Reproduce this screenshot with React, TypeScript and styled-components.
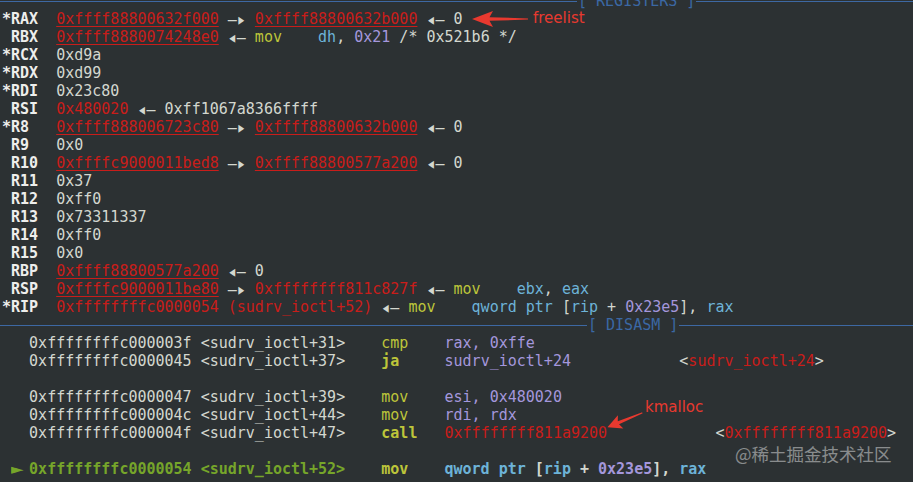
import React from "react";
import styled, { createGlobalStyle } from "styled-components";

const palette = {
  fg: "#d3d7cf",
  hi: "#eeeeec",
  red: "#c91d1a",
  yel: "#bdc53a",
  cyan: "#6db3d8",
  lav: "#a497dc",
  grn: "#76a52a",
} as const;

type Tone = keyof typeof palette;

const CELL = 9.03;

const Global = createGlobalStyle`
  html, body { margin: 0; padding: 0; background: #2c3133; }
`;

const Screen = styled.div`
  position: relative;
  width: 913px;
  height: 482px;
  overflow: hidden;
  background: #2c3133;
  font-family: "DejaVu Sans Mono", "Liberation Mono", monospace;
  font-size: 15px;
  color: ${palette.fg};
`;

const Pane = styled.div`
  display: flex;
  flex-direction: column;
  margin-top: -8px;
`;

const Line = styled.div`
  height: 18px;
  line-height: 18px;
  white-space: pre;
  padding-left: 2px;
`;

const Banner = styled.div`
  display: flex;
  align-items: center;
  height: 18px;
`;

const Rule = styled.div<{ $w?: number }>`
  height: 1px;
  background: #3d68a3;
  flex: ${(p) => (p.$w ? `0 0 ${p.$w}px` : "1 1 auto")};
`;

const BannerTitle = styled.span`
  color: #3b68a4;
  white-space: pre;
  line-height: 18px;
  padding: 0 1px;
`;

const Tok = styled.span<{ $c?: Tone; $u?: boolean; $b?: boolean }>`
  color: ${(p) => palette[p.$c ?? "fg"]};
  text-decoration: ${(p) => (p.$u ? "underline" : "none")};
  text-underline-offset: 2px;
  font-weight: ${(p) => (p.$b ? 700 : 400)};
`;

const Reg = styled.span`
  color: ${palette.hi};
  font-weight: 700;
`;

/* two-cell wide glyph (pointer arrows, current-line marker) */
const Glyph = styled.span<{ $c?: Tone; $sx: number; $sy: number; $origin?: string }>`
  display: inline-block;
  width: ${2 * CELL}px;
  height: 18px;
  vertical-align: top;
  line-height: 18px;
  color: ${(p) => palette[p.$c ?? "fg"]};
  white-space: pre;
  transform: scale(${(p) => p.$sx}, ${(p) => p.$sy});
  transform-origin: ${(p) => p.$origin ?? "center"};
`;

const CalloutText = styled.span<{ $x: number; $y: number }>`
  position: absolute;
  left: ${(p) => p.$x}px;
  top: ${(p) => p.$y}px;
  font-family: "DejaVu Sans", "Liberation Sans", sans-serif;
  font-size: 15px;
  line-height: 18px;
  color: #e8392f;
`;

const ArrowSvg = styled.svg<{ $x: number; $y: number; $rot: number }>`
  position: absolute;
  left: ${(p) => p.$x}px;
  top: ${(p) => p.$y}px;
  transform: rotate(${(p) => p.$rot}deg);
  transform-origin: center;
`;

const Watermark = styled.span`
  position: absolute;
  left: 735px;
  top: 442px;
  font-family: "Noto Sans CJK SC", "DejaVu Sans", sans-serif;
  font-size: 17.5px;
  line-height: 24px;
  color: rgba(230, 232, 232, 0.5);
  white-space: pre;
`;

const RedArrow: React.FC<{ x: number; y: number; w: number; h: number; rot?: number }> = ({
  x,
  y,
  w,
  h,
  rot = 0,
}) => (
  <ArrowSvg $x={x} $y={y} $rot={rot} width={w} height={h} viewBox="0 0 56 18" preserveAspectRatio="none">
    <path d="M0 9 L21 1 L17.5 7.2 L56 8.4 L56 9.6 L17.5 10.8 L21 17 Z" fill="#e8392f" />
  </ArrowSvg>
);

const R = ({ children }: { children: React.ReactNode }) => <Tok $c="red">{children}</Tok>;
const RU = ({ children }: { children: React.ReactNode }) => (
  <Tok $c="red" $u>
    {children}
  </Tok>
);
const To = () => (
  <Glyph $sx={1} $sy={1.35}>
    —▸
  </Glyph>
);
const Back = () => (
  <Glyph $sx={1} $sy={1.35}>
    ◂—
  </Glyph>
);

export default function App() {
  return (
    <Screen>
      <Global />
      <Pane>
        <Banner>
          <Rule $w={577} />
          <BannerTitle>[ REGISTERS ]</BannerTitle>
          <Rule />
        </Banner>
        <Line>
          <Reg>*RAX</Reg>{"  "}<RU>0xffff88800632f000</RU> <To /> <RU>0xffff88800632b000</RU> <Back /> 0
        </Line>
        <Line>
          <Reg> RBX</Reg>{"  "}<RU>0xffff8880074248e0</RU> <Back /> <Tok $c="yel">mov</Tok>{"    "}
          <Tok $c="cyan">dh</Tok>{", "}<Tok $c="lav">0x21</Tok>{" /* 0x521b6 */"}
        </Line>
        <Line>
          <Reg>*RCX</Reg>{"  0xd9a"}
        </Line>
        <Line>
          <Reg>*RDX</Reg>{"  0xd99"}
        </Line>
        <Line>
          <Reg>*RDI</Reg>{"  0x23c80"}
        </Line>
        <Line>
          <Reg> RSI</Reg>{"  "}<R>0x480020</R> <Back /> 0xff1067a8366ffff
        </Line>
        <Line>
          <Reg>*R8</Reg>{"   "}<RU>0xffff888006723c80</RU> <To /> <RU>0xffff88800632b000</RU> <Back /> 0
        </Line>
        <Line>
          <Reg> R9</Reg>{"   0x0"}
        </Line>
        <Line>
          <Reg> R10</Reg>{"  "}<RU>0xffffc9000011bed8</RU> <To /> <RU>0xffff88800577a200</RU> <Back /> 0
        </Line>
        <Line>
          <Reg> R11</Reg>{"  0x37"}
        </Line>
        <Line>
          <Reg> R12</Reg>{"  0xff0"}
        </Line>
        <Line>
          <Reg> R13</Reg>{"  0x73311337"}
        </Line>
        <Line>
          <Reg> R14</Reg>{"  0xff0"}
        </Line>
        <Line>
          <Reg> R15</Reg>{"  0x0"}
        </Line>
        <Line>
          <Reg> RBP</Reg>{"  "}<RU>0xffff88800577a200</RU> <Back /> 0
        </Line>
        <Line>
          <Reg> RSP</Reg>{"  "}<RU>0xffffc9000011be80</RU> <To /> <R>0xffffffff811c827f</R> <Back />{" "}
          <Tok $c="yel">mov</Tok>{"    "}<Tok $c="cyan">ebx</Tok>{", "}<Tok $c="cyan">eax</Tok>
        </Line>
        <Line>
          <Reg>*RIP</Reg>{"  "}<R>0xffffffffc0000054 (sudrv_ioctl+52)</R> <Back />{" "}
          <Tok $c="yel">mov</Tok>{"    "}<Tok $c="cyan">qword ptr </Tok>[<Tok $c="cyan">rip</Tok>
          {" + "}<Tok $c="lav">0x23e5</Tok>{"], "}<Tok $c="cyan">rax</Tok>
        </Line>
        <Banner>
          <Rule $w={587} />
          <BannerTitle>[ DISASM ]</BannerTitle>
          <Rule />
        </Banner>
        <Line>
          {"   0xffffffffc000003f <sudrv_ioctl+31>    "}
          <Tok $c="yel">cmp</Tok>{"    "}<Tok $c="lav">rax, 0xffe</Tok>
        </Line>
        <Line>
          {"   0xffffffffc0000045 <sudrv_ioctl+37>    "}
          <Tok $c="yel" $b>ja</Tok>
          {"     "}
          <Tok $c="lav">sudrv_ioctl+24</Tok>
          {"            <"}
          <R>sudrv_ioctl+24</R>&gt;
        </Line>
        <Line> </Line>
        <Line>
          {"   0xffffffffc0000047 <sudrv_ioctl+39>    "}
          <Tok $c="yel">mov</Tok>{"    "}<Tok $c="lav">esi, 0x480020</Tok>
        </Line>
        <Line>
          {"   0xffffffffc000004c <sudrv_ioctl+44>    "}
          <Tok $c="yel">mov</Tok>{"    "}<Tok $c="lav">rdi, rdx</Tok>
        </Line>
        <Line>
          {"   0xffffffffc000004f <sudrv_ioctl+47>    "}
          <Tok $c="yel" $b>call</Tok>
          {"   "}
          <R>0xffffffff811a9200</R>
          {"            <"}
          <R>0xffffffff811a9200</R>&gt;
        </Line>
        <Line> </Line>
        <Line>
          {" "}
          <Glyph $c="grn" $sx={1.4} $sy={1.2} $origin="left center">
            ►
          </Glyph>
          <Tok $c="grn" $b>0xffffffffc0000054 &lt;sudrv_ioctl+52&gt;</Tok>
          {"    "}
          <Tok $c="yel" $b>mov</Tok>
          {"    "}
          <Tok $c="cyan" $b>qword ptr </Tok>
          <Tok $b>[</Tok>
          <Tok $c="cyan" $b>rip</Tok>
          <Tok $b> + </Tok>
          <Tok $c="lav" $b>0x23e5</Tok>
          <Tok $b>], </Tok>
          <Tok $c="cyan" $b>rax</Tok>
        </Line>
      </Pane>

      <RedArrow x={472} y={10} w={56} h={18} />
      <CalloutText $x={533} $y={9}>
        freelist
      </CalloutText>

      <RedArrow x={606} y={412} w={38} h={16} rot={-22.4} />
      <CalloutText $x={645} $y={398}>
        kmalloc
      </CalloutText>

      <Watermark>@稀土掘金技术社区</Watermark>
    </Screen>
  );
}
